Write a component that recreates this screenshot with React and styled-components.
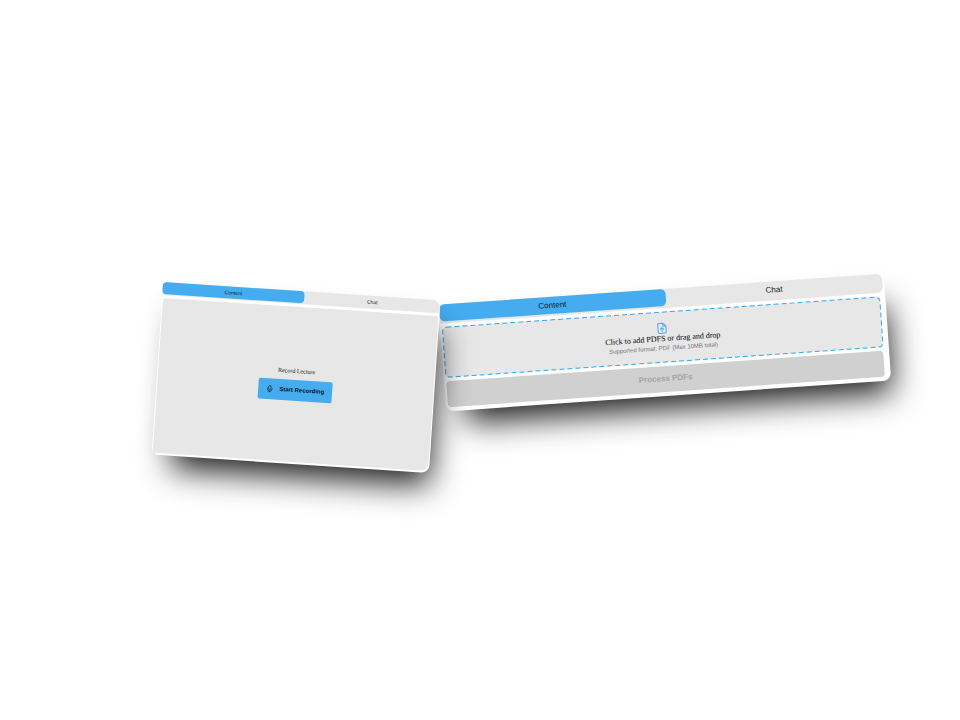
import React from "react";
import styled, { createGlobalStyle } from "styled-components";

const GlobalStyle = createGlobalStyle`
  * { box-sizing: border-box; }
  body { margin: 0; background: #fff; font-family: "Liberation Sans", Arial, sans-serif; }
  button { font-family: inherit; border: 0; padding: 0; cursor: pointer; }
`;

const Stage = styled.main`
  display: grid;
  grid-template-columns: 29fr 46.5fr;
  column-gap: 6px;
  align-items: start;
  padding: 289px 7.5% 120px 16.4%;
  min-height: 100vh;
  overflow: hidden;
`;

const Card = styled.section`
  position: relative;
  z-index: ${(p) => p.$level};
  display: flex;
  flex-direction: column;
  margin-top: ${(p) => (p.$large ? 0 : 2)}px;
  background: #fff;
  border-radius: 8px;
  box-shadow: 10px 22px 32px -10px rgba(0, 0, 0, 0.9);
  transform: rotate(${(p) => p.$tilt}deg);
`;

const Tabs = styled.div`
  display: grid;
  grid-template-columns: 51fr 49fr;
  align-items: start;
  height: ${(p) => (p.$large ? 19 : 13)}px;
  margin-right: ${(p) => (p.$large ? 2 : 0)}px;
  background: #e7e7e7;
  border-radius: ${(p) => (p.$large ? "6px 6px 6px 0" : "6px 8px 0 0")};
`;

const Tab = styled.button`
  height: ${(p) => (p.$large ? 17 : 12)}px;
  font-size: ${(p) => (p.$large ? 8 : 5)}px;
  line-height: 1;
  color: #111827;
  background: ${(p) => (p.$active ? "#45adef" : "transparent")};
  border-radius: ${(p) => (p.$large ? 5 : 4)}px;
`;

const RecordPanel = styled.div`
  display: flex;
  flex-direction: column;
  align-items: center;
  justify-content: center;
  gap: 5px;
  height: 155px;
  margin: 3px 1px 2px;
  padding-bottom: 2px;
  background: #e7e7e7;
  border-radius: 3px 3px 8px 3px;
`;

const RecordTitle = styled.h2`
  margin: 0;
  font: 400 6px/8px "Liberation Serif", serif;
  color: #222;
`;

const RecordButton = styled.button`
  display: flex;
  align-items: center;
  justify-content: center;
  gap: 6px;
  width: 74px;
  height: 21px;
  font-size: 6px;
  font-weight: 700;
  color: #06121c;
  background: #45adef;
  border-radius: 2px;
`;

const UploadPanel = styled.div`
  display: flex;
  flex-direction: column;
  gap: 4px;
  padding: 4px 6px 4px 2px;
`;

const DropZone = styled.button`
  position: relative;
  display: flex;
  flex-direction: column;
  align-items: center;
  justify-content: center;
  height: 50px;
  background: #e7e7e7;
  border-radius: 4px;
`;

const DashedOutline = styled.svg`
  position: absolute;
  inset: 0;
  width: 100%;
  height: 100%;
  overflow: visible;
  fill: none;
  stroke: #34a5ee;
  stroke-width: 1;
  stroke-dasharray: 5 3;
`;

const DropTitle = styled.span`
  font: 400 8px/10px "Liberation Serif", serif;
  color: #000;
`;

const DropHint = styled.span`
  font-size: 6px;
  line-height: 8px;
  color: #776f7b;
`;

const ProcessButton = styled.button`
  height: 26px;
  font-size: 8px;
  line-height: 1;
  font-weight: 700;
  color: #a5a5a5;
  background: #d0d0d0;
  border-radius: 4px;
`;

const Icon = styled.svg`
  flex: none;
  width: ${(p) => p.$size}px;
  height: ${(p) => p.$size}px;
  fill: none;
  stroke: ${(p) => p.$color};
  stroke-width: ${(p) => p.$weight};
  stroke-linecap: round;
  stroke-linejoin: round;
`;

function CardTabs({ large }) {
  return (
    <Tabs $large={large} role="tablist">
      <Tab $large={large} $active role="tab" aria-selected="true">Content</Tab>
      <Tab $large={large} role="tab" aria-selected="false">Chat</Tab>
    </Tabs>
  );
}

export default function App() {
  return (
    <>
      <GlobalStyle />
      <Stage>
        <Card $tilt={3.8} $level={2}>
          <CardTabs />
          <RecordPanel>
            <RecordTitle>Record Lecture</RecordTitle>
            <RecordButton>
              <Icon $size={7} $weight={2} $color="#06121c" viewBox="0 0 24 24" aria-hidden="true">
                <rect x="8" y="1" width="8" height="14" rx="4" />
                <path d="M4 10v2a8 8 0 0 0 16 0v-2M12 20v3M8 23h8" />
              </Icon>
              Start Recording
            </RecordButton>
          </RecordPanel>
        </Card>
        <Card $tilt={-4} $level={1} $large>
          <CardTabs large />
          <UploadPanel>
            <DropZone>
              <DashedOutline aria-hidden="true">
                <rect width="100%" height="100%" rx="4" />
              </DashedOutline>
              <Icon $size={12} $weight={2} $color="#45adef" viewBox="0 0 24 24" aria-hidden="true">
                <path d="M14 2H6a2 2 0 0 0-2 2v16a2 2 0 0 0 2 2h12a2 2 0 0 0 2-2V8zM14 2v6h6M12 18v-7M9 14l3-3 3 3" />
              </Icon>
              <DropTitle>Click to add PDFS or drag and drop</DropTitle>
              <DropHint>Supported format: PDF (Max 10MB total)</DropHint>
            </DropZone>
            <ProcessButton disabled>Process PDFs</ProcessButton>
          </UploadPanel>
        </Card>
      </Stage>
    </>
  );
}
